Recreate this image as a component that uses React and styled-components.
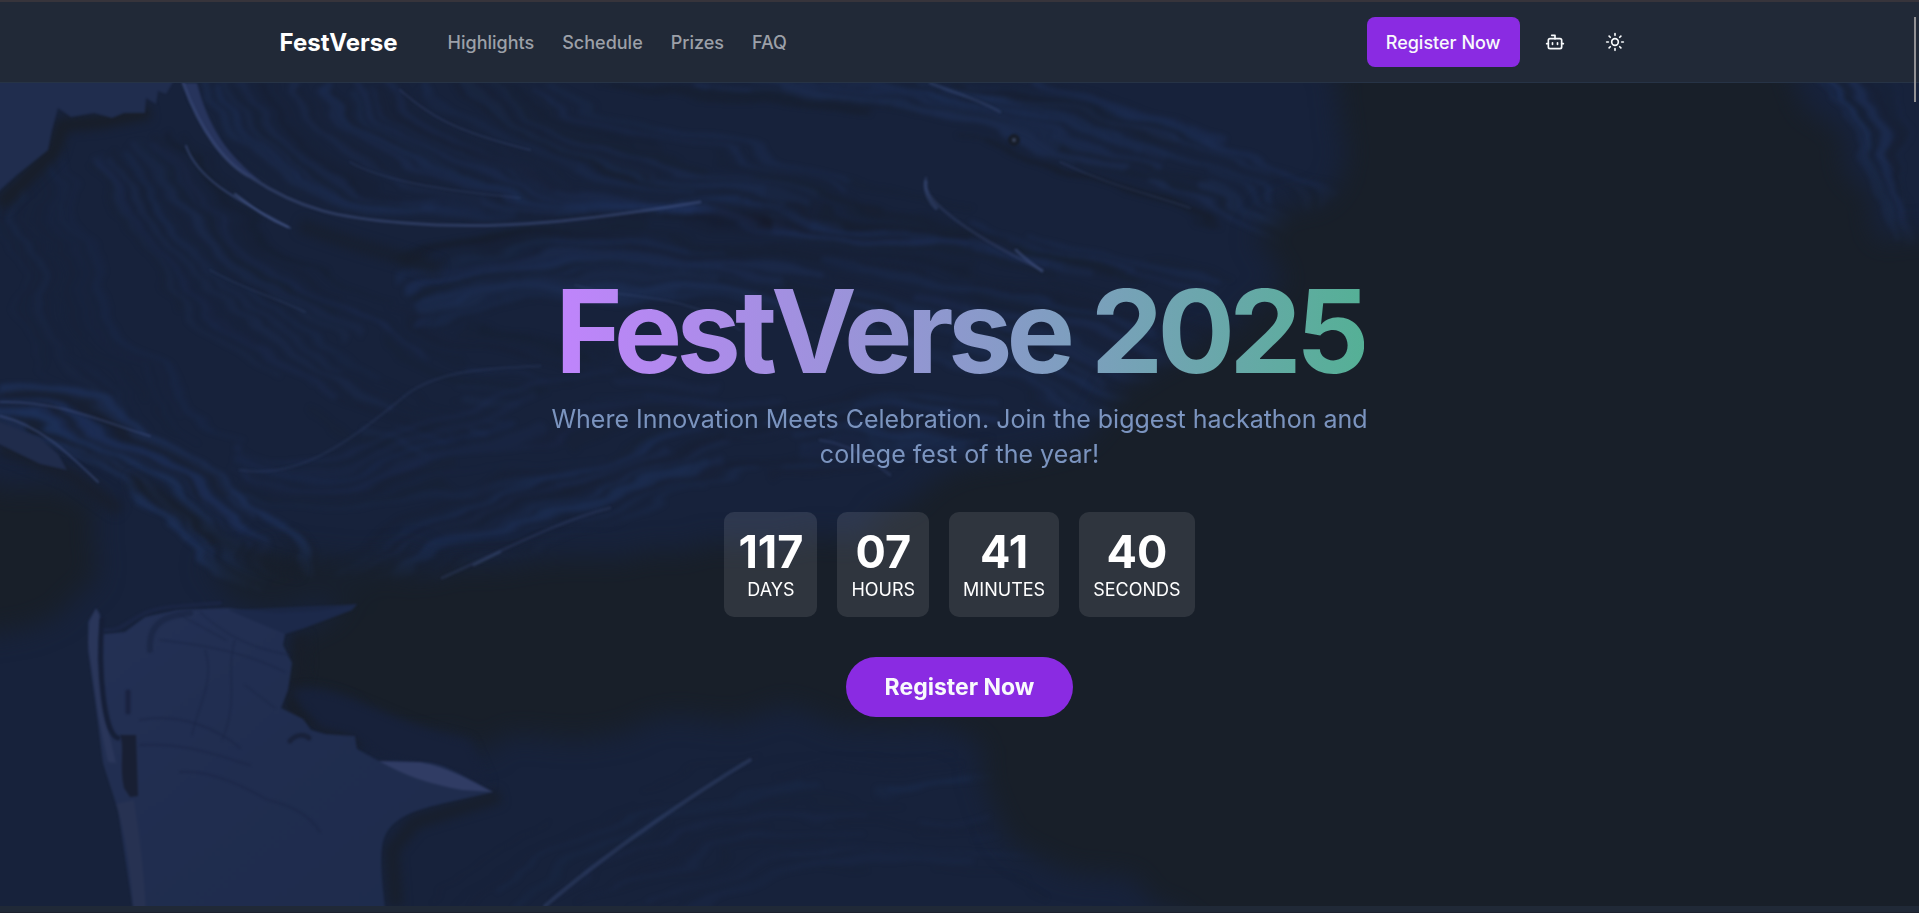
import React from "react";
import styled, { createGlobalStyle } from "styled-components";
import { Bot, Sun } from "lucide-react";

const GlobalStyle = createGlobalStyle`
  *, *::before, *::after { box-sizing: border-box; }
  html, body { margin: 0; height: 100%; }
  #root { height: 100%; }
  body {
    background: #181f29;
    color: #fff;
    font-family: Inter, "Liberation Sans", sans-serif;
    overflow: hidden;
  }
`;

const Page = styled.div`
  display: flex;
  flex-direction: column;
  height: 100vh;
  min-height: 640px;
`;

const Header = styled.header`
  flex: none;
  border-top: 2px solid #37343b;
  border-bottom: 1px solid #263346;
  background: #212937;
`;

const HeaderInner = styled.div`
  display: flex;
  align-items: center;
  width: 100%;
  max-width: 1400px;
  height: 80px;
  margin: 0 auto;
  padding: 0 20px;
`;

const Brand = styled.a`
  margin-right: 50px;
  padding-top: 2px;
  color: #fff;
  font-size: 24px;
  font-weight: 700;
  line-height: 32px;
  text-decoration: none;
`;

const Nav = styled.nav`
  display: flex;
  gap: 28px;
  padding-top: 2px;
`;

const NavLink = styled.a`
  color: #9ca0a8;
  font-size: 18px;
  font-weight: 500;
  line-height: 24px;
  text-decoration: none;
`;

const Actions = styled.div`
  display: flex;
  align-items: center;
  gap: 10px;
  margin-left: auto;
`;

const Button = styled.button`
  border: 0;
  cursor: pointer;
  background: #8a2be2;
  color: #f8fafc;
  font-family: inherit;
  height: ${(p) => (p.$large ? 60 : 50)}px;
  padding: 0 ${(p) => (p.$large ? 39 : 19)}px;
  border-radius: ${(p) => (p.$large ? 30 : 8)}px;
  font-size: ${(p) => (p.$large ? 23 : 18)}px;
  font-weight: ${(p) => (p.$large ? 700 : 500)};
`;

const IconButton = styled.button`
  display: grid;
  place-items: center;
  width: 50px;
  height: 50px;
  padding: 0;
  border: 0;
  background: transparent;
  color: #f8fafc;
  cursor: pointer;
`;

const Hero = styled.main`
  position: relative;
  flex: 1;
  display: flex;
  align-items: center;
  justify-content: center;
  overflow: hidden;
`;

const Backdrop = styled.svg`
  position: absolute;
  inset: 0;
  width: 100%;
  height: 100%;
`;

const HeroContent = styled.div`
  position: relative;
  display: flex;
  flex-direction: column;
  align-items: center;
  text-align: center;
`;

const Title = styled.h1`
  margin: 0 0 10px;
  font-size: 115px;
  font-weight: 700;
  line-height: 120px;
  letter-spacing: -0.05em;
  white-space: nowrap;
  background: linear-gradient(to right, #c084fc, #829dc3 60%, #55b096);
  background-clip: text;
  -webkit-background-clip: text;
  color: transparent;
`;

const Tagline = styled.p`
  max-width: 840px;
  margin: 0 0 40px;
  color: #7b94bf;
  font-size: 25px;
  line-height: 35px;
`;

const Countdown = styled.div`
  display: flex;
  gap: 20px;
  margin-bottom: 40px;
`;

const TimeCard = styled.div`
  display: flex;
  flex-direction: column;
  align-items: center;
  padding: 15px 14px;
  border-radius: 10px;
  background: rgba(255, 255, 255, 0.1);
`;

const TimeValue = styled.span`
  font-size: 45px;
  font-weight: 700;
  line-height: 50px;
`;

const TimeLabel = styled.span`
  font-size: 18px;
  line-height: 25px;
`;

const NextSection = styled.section`
  flex: none;
  height: 7px;
  border-bottom: 1px solid #1b202d;
  background: #202937;
`;

const ScrollThumb = styled.div`
  position: fixed;
  top: 17px;
  right: 3px;
  width: 2px;
  height: 85px;
  background: #929194;
`;

/* Brush strokes are spread between a first and a last cubic curve. */
const brushes = [
  { a: [190, 83, 250, 250, 380, 225, 700, 200], b: [560, 83, 700, 150, 900, 180, 1230, 290], n: 40, o: 0.3 },
  { a: [600, 83, 760, 100, 1000, 110, 1290, 260], b: [1060, 83, 1150, 110, 1250, 140, 1330, 190], n: 22, o: 0.34 },
  { a: [90, 160, 140, 280, 230, 400, 420, 470], b: [185, 130, 260, 270, 400, 300, 620, 350], n: 24, o: 0.22 },
  { a: [400, 255, 600, 200, 900, 230, 1260, 330], b: [420, 320, 600, 270, 850, 310, 1080, 420], n: 24, o: 0.28 },
  { a: [0, 385, 130, 400, 220, 470, 330, 560], b: [0, 430, 90, 430, 160, 520, 250, 590], n: 20, o: 0.45 },
  { a: [330, 560, 500, 480, 700, 390, 1000, 400], b: [450, 570, 600, 520, 760, 450, 960, 470], n: 20, o: 0.26 },
  { a: [230, 440, 350, 520, 420, 360, 640, 370], b: [250, 500, 400, 560, 560, 440, 900, 430], n: 14, o: 0.18 },
  { a: [440, 900, 560, 800, 700, 760, 950, 740], b: [700, 906, 800, 860, 900, 850, 1060, 900], n: 16, o: 0.16 },
  { a: [5, 210, 20, 350, 40, 380, 60, 400], b: [60, 150, 90, 300, 150, 380, 250, 440], n: 12, o: 0.1 },
  { a: [1815, 83, 1850, 140, 1880, 200, 1890, 235], b: [1900, 83, 1910, 120, 1915, 190, 1919, 230], n: 10, o: 0.4 },
];

const toPath = (c) => `M${c[0]} ${c[1]}C${c.slice(2).join(" ")}`;

/* Repeatable pseudo-random number in 0..1 */
const noise = (n) => {
  const s = Math.sin(n * 127.1) * 43758.5453;
  return s - Math.floor(s);
};

const strokes = brushes.flatMap(({ a, b, n, o }, g) =>
  Array.from({ length: n }, (_, i) => {
    const r = noise(i + g * 50 + 1);
    const t = (i + r * 0.9) / n;
    return {
      key: `${g}-${i}`,
      d: toPath(a.map((v, k) => Math.round(v + (b[k] - v) * t + (noise(i * 9 + k + g) - 0.5) * 18))),
      stroke: r > 0.5 ? "#1f325c" : "#171d29",
      width: 1 + Math.round(noise(i * 3 + g) * 8),
      opacity: o * (0.4 + r),
      dash: `${Math.round(120 + r * 300)} ${Math.round(40 + noise(i * 5 + g) * 160)}`,
    };
  })
);

const highlights = [
  ["M183 83C200 130 225 165 252 178C300 210 340 218 405 223C500 231 590 220 700 202", 3, 0.45],
  ["M186 146C200 185 250 205 290 228", 2, 0.55],
  ["M235 194C250 205 265 218 288 227", 2, 0.7],
  ["M350 162C380 180 440 190 520 198", 2, 0.2],
  ["M400 90C430 115 450 130 530 150", 2, 0.25],
  ["M926 178C918 196 960 230 1042 270", 3, 0.25],
  ["M926 182C924 192 930 202 936 208", 4, 0.35],
  ["M1016 250C1026 260 1034 265 1042 271", 3, 0.5],
  ["M1060 162C1110 186 1150 194 1190 208", 2, 0.2],
  ["M930 83C960 95 980 100 1000 112", 3, 0.3],
  ["M210 270C245 290 270 295 305 312", 2, 0.2],
  ["M0 402C60 400 110 425 150 436", 2, 0.4],
  ["M0 416C40 425 70 455 98 482", 2, 0.5],
  ["M442 578C500 552 560 520 610 508", 3, 0.22],
  ["M474 565L500 552", 3, 0.3],
  ["M545 906C610 850 700 790 750 760", 4, 0.3],
  ["M240 470C300 480 350 440 400 400C430 372 480 368 540 366", 3, 0.15],
  ["M820 440C850 445 865 455 890 475", 3, 0.22],
  ["M575 285C620 300 680 290 740 330", 2, 0.2],
];

function PaintBackdrop() {
  return (
    <Backdrop viewBox="0 83 1919 823" preserveAspectRatio="xMidYMid slice" aria-hidden="true">
      <defs>
        <filter id="edge" x="-10%" y="-10%" width="120%" height="120%" colorInterpolationFilters="sRGB">
          <feTurbulence type="fractalNoise" baseFrequency="0.012 0.02" numOctaves="3" seed="4" result="n" />
          <feDisplacementMap in="SourceGraphic" in2="n" scale="40" xChannelSelector="R" yChannelSelector="G" />
          <feGaussianBlur stdDeviation="13" />
        </filter>
        <filter id="shade" x="-20%" y="-20%" width="140%" height="140%" colorInterpolationFilters="sRGB">
          <feGaussianBlur stdDeviation="5" />
        </filter>
        <filter id="brush" x="-5%" y="-5%" width="110%" height="110%" colorInterpolationFilters="sRGB">
          <feTurbulence type="fractalNoise" baseFrequency="0.006 0.02" numOctaves="3" seed="8" result="n" />
          <feDisplacementMap in="SourceGraphic" in2="n" scale="44" xChannelSelector="R" yChannelSelector="G" />
          <feGaussianBlur stdDeviation="2" />
        </filter>
        <filter id="crisp" x="-5%" y="-5%" width="110%" height="110%" colorInterpolationFilters="sRGB">
          <feGaussianBlur stdDeviation="1" />
        </filter>
        <linearGradient id="flake" x1="0" y1="0" x2="1" y2="1">
          <stop offset="0" stopColor="#243155" />
          <stop offset="0.5" stopColor="#202d4f" />
          <stop offset="1" stopColor="#1e2c4c" />
        </linearGradient>
      </defs>
      <rect y="83" width="1919" height="823" fill="#17223b" />

      <g fill="none" strokeLinecap="round" filter="url(#brush)">
        {strokes.map((s) => (
          <path
            key={s.key}
            d={s.d}
            stroke={s.stroke}
            strokeWidth={s.width}
            strokeDasharray={s.dash}
            opacity={s.opacity}
          />
        ))}
      </g>

      <g fill="#181f29" filter="url(#edge)">
        <path d="M1328 40L1345 160L1318 205L1262 240L1275 290L1235 330L1120 385L1085 440L960 470L860 530L740 545L640 555L450 568L370 590L295 628L292 690L350 720L440 745L560 745L640 730L760 712L950 722L985 745L985 800L1020 850L1140 890L1230 960L1990 960L1990 230L1885 240L1850 150L1805 110L1790 40Z" />
        <path d="M-50 478L40 485L100 500L92 580L50 625L-50 640Z" />
        <path d="M200 555L330 560L420 555L380 600L230 608Z" opacity="0.8" />
      </g>
      <g fill="none" stroke="#181e29" strokeWidth="14" filter="url(#shade)">
        <path d="M0 205L55 150L62 125L100 122L150 112" />
        <path d="M300 225C350 245 380 250 440 270" opacity="0.6" />
        <path d="M300 635L302 665L292 708L325 728L362 742" />
        <path d="M500 796L415 822L392 850L396 906" opacity="0.8" />
        <path d="M130 480C190 510 230 560 300 570" opacity="0.6" />
        <path d="M0 448L70 475L120 510" opacity="0.7" />
      </g>
      <path d="M290 690C340 680 380 720 470 740L490 785L380 758L350 735L320 728Z" fill="#17213a" filter="url(#shade)" />

      <g filter="url(#crisp)">
        <path d="M-9 74H178L166 94L158 91L156 104L146 98L145 113L124 113L112 118L94 113L71 117L58 108L52 130L48 150L18 174L-9 198Z" fill="#202d4e" />
        <path d="M-9 418L40 438L58 454L67 470L40 464L-9 440Z" fill="#202c4b" />
        <path d="M183 83H197C208 125 226 155 262 182L245 174C215 155 196 120 183 83Z" fill="#27345c" />
        <path d="M96 608L88 622L88 650L96 707L103 763L118 810L134 916H386C380 870 380 850 384 838C391 818 415 810 440 804L493 792C460 775 445 762 420 762L379 761L357 749L355 736L325 734L311 730L303 719L281 708L288 690L292 663L283 645L285 634L304 628L352 610L357 604L318 611L277 613L228 608L178 610L145 617L125 632L103 634L100 614Z" fill="url(#flake)" />
        <path d="M228 610L357 604L352 610L304 628L285 634Z" fill="#1c2849" opacity="0.8" />
        <path d="M379 761L420 762C450 768 470 780 493 792L462 790C430 784 405 776 379 761Z" fill="#303c64" />
        <path d="M96 609L90 620L88 642L98 715L108 762L116 763L106 720L98 660L100 618Z" fill="#2a365a" />
        <path d="M120 735C125 748 119 765 124 788L130 797L138 796L136 735Z" fill="#181f33" />
        <path d="M134 800C140 840 145 880 146 916H134C130 860 124 830 116 804Z" fill="#273252" />
      </g>
      <g fill="none" strokeLinecap="round" filter="url(#crisp)">
        <path d="M102 620C98 670 104 735 118 738" stroke="#161f37" strokeWidth="5" />
        <path d="M128 692V712" stroke="#1a2341" strokeWidth="5" />
        <path d="M105 630C130 632 130 608 180 606L220 603" stroke="#1a2543" strokeWidth="4" />
        <path d="M150 650C148 620 170 615 190 613" stroke="#1a2543" strokeWidth="6" opacity="0.7" />
        <path d="M160 640C200 645 240 650 285 672M200 612C230 640 260 650 290 655M180 615L226 640M245 685L275 708M205 650C215 680 200 700 192 735M235 640C225 670 240 700 222 740" stroke="#192443" strokeWidth="1" opacity="0.8" />
        <path d="M140 720C180 712 220 730 240 748M140 745C190 742 230 760 250 765M180 772C215 770 250 790 268 800M268 800C290 805 310 815 320 832" stroke="#192443" strokeWidth="2" opacity="0.5" />
        <path d="M290 741C296 734 304 734 309 738" stroke="#19223b" strokeWidth="5" />
        {highlights.map(([d, w, o]) => (
          <path key={d} d={d} stroke="#46588c" strokeWidth={w} opacity={o} />
        ))}
        <circle cx="1014" cy="140" r="4" stroke="#171d29" strokeWidth="4" fill="#3a455f" />
      </g>
    </Backdrop>
  );
}

const links = ["Highlights", "Schedule", "Prizes", "FAQ"];
const time = [
  ["117", "DAYS"],
  ["07", "HOURS"],
  ["41", "MINUTES"],
  ["40", "SECONDS"],
];

export default function App() {
  return (
    <Page>
      <GlobalStyle />
      <Header>
        <HeaderInner>
          <Brand href="#home">FestVerse</Brand>
          <Nav>
            {links.map((l) => (
              <NavLink key={l} href={`#${l.toLowerCase()}`}>{l}</NavLink>
            ))}
          </Nav>
          <Actions>
            <Button type="button">Register Now</Button>
            <IconButton type="button" aria-label="Assistant"><Bot size={20} /></IconButton>
            <IconButton type="button" aria-label="Toggle theme"><Sun size={20} /></IconButton>
          </Actions>
        </HeaderInner>
      </Header>
      <Hero>
        <PaintBackdrop />
        <HeroContent>
          <Title>FestVerse 2025</Title>
          <Tagline>
            Where Innovation Meets Celebration. Join the biggest hackathon and college fest of the year!
          </Tagline>
          <Countdown>
            {time.map(([value, label]) => (
              <TimeCard key={label}>
                <TimeValue>{value}</TimeValue>
                <TimeLabel>{label}</TimeLabel>
              </TimeCard>
            ))}
          </Countdown>
          <Button type="button" $large>Register Now</Button>
        </HeroContent>
      </Hero>
      <NextSection />
      <ScrollThumb />
    </Page>
  );
}
